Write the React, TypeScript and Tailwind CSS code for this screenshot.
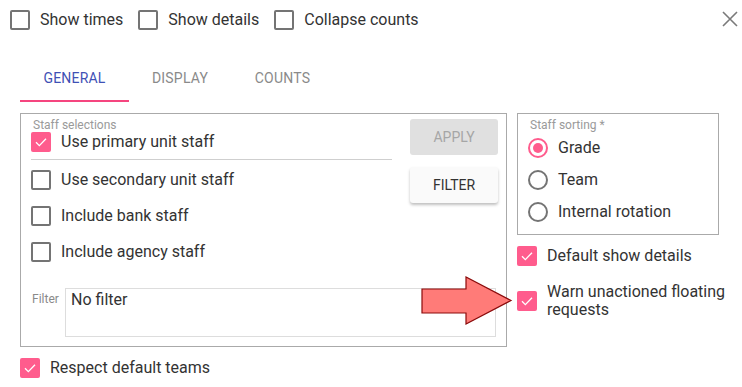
const font = { fontFamily: "Roboto, 'Liberation Sans', sans-serif" };

function Box({ checked }: { checked?: boolean }) {
  if (checked) {
    return (
      <span className="w-[20px] h-[20px] rounded-[2px] bg-[#ff5c8d] flex items-center justify-center shrink-0">
        <svg width="16" height="16" viewBox="0 0 24 24" fill="none">
          <path d="M4.5 12.5l5 5L19.5 7" stroke="white" strokeWidth="2" />
        </svg>
      </span>
    );
  }
  return <span className="w-[20px] h-[20px] rounded-[2px] border-2 border-[#747474] shrink-0" />;
}

function Radio({ on }: { on?: boolean }) {
  return (
    <span
      className={`w-[20px] h-[20px] rounded-full border-2 flex items-center justify-center shrink-0 ${
        on ? "border-[#ff5c8d]" : "border-[#747474]"
      }`}
    >
      {on && <span className="w-[10px] h-[10px] rounded-full bg-[#ff5c8d]" />}
    </span>
  );
}

const staff = ["Use secondary unit staff", "Include bank staff", "Include agency staff"];
const sorting = ["Grade", "Team", "Internal rotation"];

export default function App() {
  return (
    <div className="relative w-[742px] h-[387px] bg-white text-[16px] text-[#333] overflow-hidden" style={font}>
      {/* top toggles */}
      <div className="flex items-center h-[20px] mt-[10px] pl-[10px]">
        <Box />
        <span className="ml-[10px]">Show times</span>
        <span className="ml-[15px]" />
        <Box />
        <span className="ml-[10px]">Show details</span>
        <span className="ml-[15px]" />
        <Box />
        <span className="ml-[10px]">Collapse counts</span>
      </div>
      <svg className="absolute left-[722px] top-[11px]" width="16" height="16" viewBox="0 0 16 16">
        <path d="M1 1L15 15M15 1L1 15" stroke="#7a7a7a" strokeWidth="1.6" />
      </svg>

      {/* tabs */}
      <div className="flex ml-[20px] mt-[24px] h-[48px] text-[14px] tracking-[0.2px]">
        <div className="relative w-[109px] flex items-center justify-center text-[#3f51b5]">
          GENERAL
          <span className="absolute left-0 right-0 bottom-0 h-[2px] bg-[#f5457f]" />
        </div>
        <div className="w-[102px] flex items-center justify-center text-[#8a8a8a]">DISPLAY</div>
        <div className="w-[103px] flex items-center justify-center text-[#8a8a8a]">COUNTS</div>
      </div>

      <div className="flex mt-[11px] ml-[20px]">
        {/* left column */}
        <div>
          <div className="w-[487px] h-[234px] border border-[#aaa] flex flex-col">
            <div className="flex">
              <div className="flex-1 pl-[10px]">
                <div className="mt-[4px] ml-[2px] text-[12px] leading-[14px] text-[#9a9a9a]">Staff selections</div>
                <div className="flex items-center h-[20px]">
                  <Box checked />
                  <span className="ml-[10px]">Use primary unit staff</span>
                </div>
                <div className="mt-[7px] h-px w-[361px] bg-[#cfcfcf]" />
                <div className="mt-[2px]">
                  {staff.map((s) => (
                    <div key={s} className="flex items-center h-[36px]">
                      <Box />
                      <span className="ml-[10px]">{s}</span>
                    </div>
                  ))}
                </div>
              </div>
              <div className="w-[88px] mr-[8px] pt-[5px] text-[14px]">
                <div className="h-[36px] rounded-[3px] bg-[#e0e0e0] text-[#a6a6a6] flex items-center justify-center">
                  APPLY
                </div>
                <div className="mt-[12px] h-[36px] rounded-[3px] bg-[#fafafa] text-[#333] flex items-center justify-center shadow-[0_2px_3px_rgba(0,0,0,0.25)]">
                  FILTER
                </div>
              </div>
            </div>
            <div className="flex mt-[18px]">
              <div className="w-[44px] pl-[11px] pt-[4px] text-[12px] leading-[14px] text-[#8a8a8a]">Filter</div>
              <div className="w-[431px] h-[49px] border border-[#ddd] pl-[5px] pt-[1px] leading-[20px]">No filter</div>
            </div>
          </div>
          <div className="flex items-center h-[20px] mt-[11px]">
            <Box checked />
            <span className="ml-[10px]">Respect default teams</span>
          </div>
        </div>

        {/* right column */}
        <div className="ml-[10px]">
          <div className="w-[202px] h-[122px] border border-[#aaa] pl-[10px]">
            <div className="mt-[4px] ml-[2px] text-[12px] leading-[14px] text-[#9a9a9a]">Staff sorting *</div>
            {sorting.map((s, i) => (
              <div key={s} className="flex items-center h-[32px]">
                <Radio on={i === 0} />
                <span className="ml-[10px]">{s}</span>
              </div>
            ))}
          </div>
          <div className="flex items-center h-[20px] mt-[11px]">
            <Box checked />
            <span className="ml-[10px]">Default show details</span>
          </div>
          <div className="flex items-center mt-[17px]">
            <Box checked />
            <span className="ml-[10px] w-[185px] leading-[18px]">Warn unactioned floating requests</span>
          </div>
        </div>
      </div>

      {/* annotation arrow */}
      <svg className="absolute left-[420px] top-[276px]" width="94" height="50" viewBox="0 0 94 50">
        <polygon
          points="2,13 46,13 46,1 91,24.5 46,48 46,37 2,37"
          fill="#ff7b78"
          stroke="#8b0b0b"
          strokeWidth="1.2"
        />
      </svg>
    </div>
  );
}
